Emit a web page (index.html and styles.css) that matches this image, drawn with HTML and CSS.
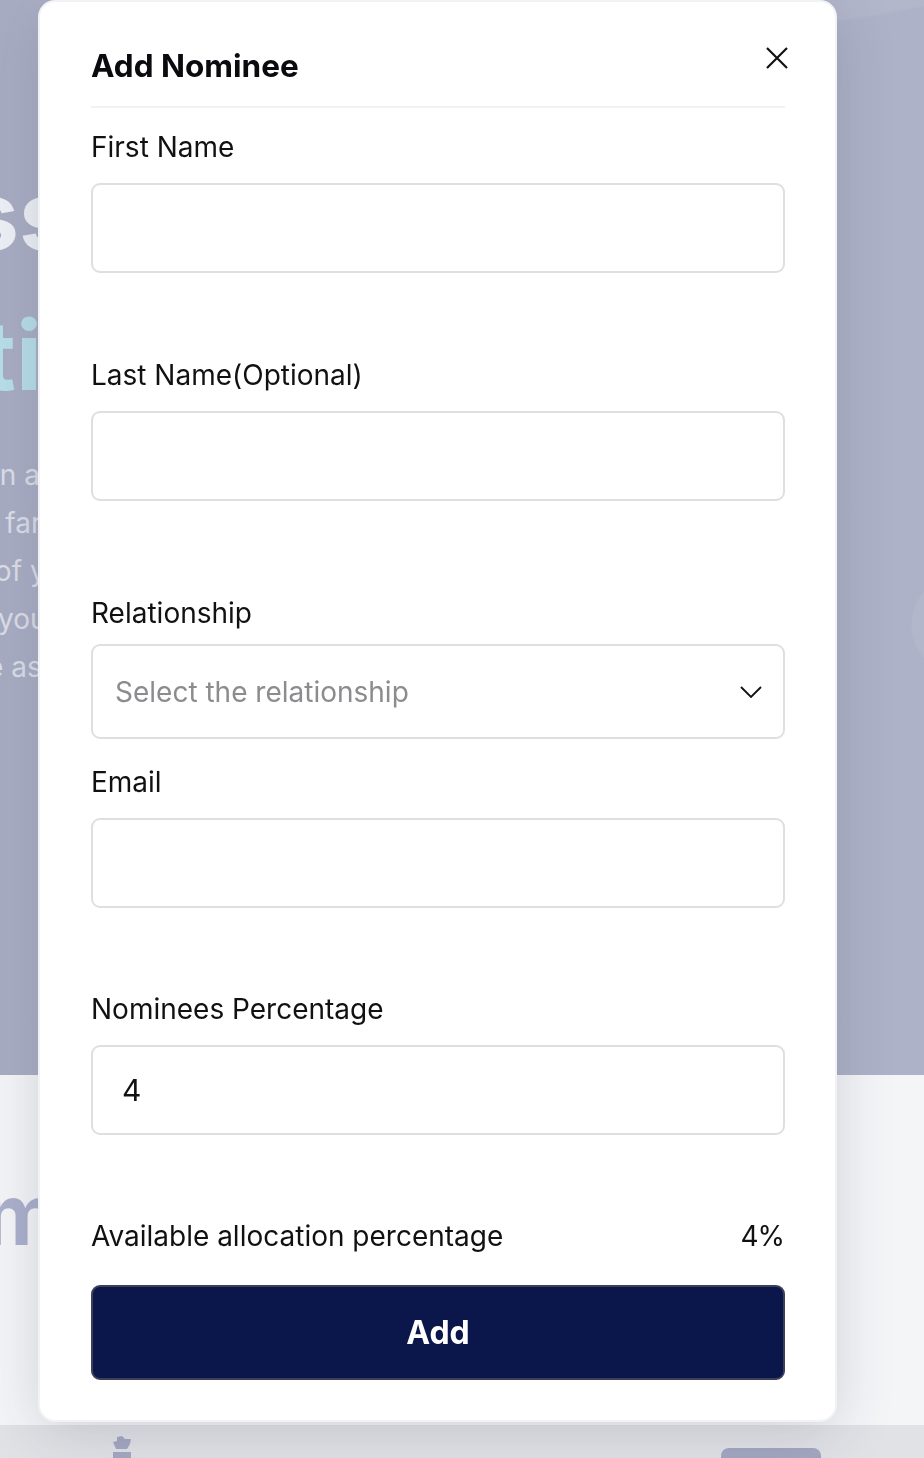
FILE: index.html
```html
<!DOCTYPE html>
<html lang="en">
<head>
<meta charset="utf-8">
<title>Add Nominee</title>
<link rel="stylesheet" href="styles.css">
</head>
<body>
<div class="page">
  <section class="hero">
    <div class="hero-title">
      <div class="clip-line ht1"><span>Busines</span><span class="tail">s</span></div>
      <div class="clip-line ht2"><span>Protecti</span><span class="tail">on</span></div>
    </div>
    <div class="hero-para">
      <div class="clip-line p1"><span>Protection when a</span><span class="tail">n</span></div>
      <div class="clip-line p2"><span>you have come so fa</span><span class="tail">r</span></div>
      <div class="clip-line p3"><span>taking care of</span><span class="tail">&nbsp;your</span></div>
      <div class="clip-line p4"><span>family and yo</span><span class="tail">ur</span></div>
      <div class="clip-line p5"><span>loved ones are the same a</span><span class="tail">ssets</span></div>
    </div>
  </section>
  <section class="features">
    <div class="clip-line f1"><span>Premium</span><span class="tail"></span></div>
  </section>
  <footer class="strip">
    <svg class="strip-icon" width="28" height="22" viewBox="0 0 28 22"><path d="M9 1 L14 0 L17 3 L23 3 L22 8 L19 13 L8 13 L5 6 L9 5 Z" fill="#a4a8c3"/><rect x="5" y="16" width="18" height="6" fill="#a4a8c3"/></svg>
    <div class="strip-pill"></div>
  </footer>
</div>

<div class="overlay">
  <div class="modal">
    <div class="modal-head">
      <h2 class="modal-title">Add Nominee</h2>
      <button class="close-btn" aria-label="Close">
        <svg width="24" height="24" viewBox="0 0 24 24"><path d="M2 2 L22 22 M22 2 L2 22" stroke="#111" stroke-width="2.2" stroke-linecap="butt" fill="none"/></svg>
      </button>
    </div>
    <div class="divider"></div>
    <form class="form">
      <div class="field f-first">
        <label class="label">First Name</label>
        <div class="input"></div>
      </div>
      <div class="field f-last">
        <label class="label">Last Name(Optional)</label>
        <div class="input"></div>
      </div>
      <div class="field f-rel">
        <label class="label">Relationship</label>
        <div class="input select">
          <span class="placeholder">Select the relationship</span>
          <svg class="chev" width="22" height="12" viewBox="0 0 22 12"><path d="M1 1 L11 11 L21 1" stroke="#111" stroke-width="1.8" fill="none"/></svg>
        </div>
      </div>
      <div class="field f-email">
        <label class="label">Email</label>
        <div class="input"></div>
      </div>
      <div class="field f-pct">
        <label class="label">Nominees Percentage</label>
        <div class="input"><span class="value">4</span></div>
      </div>
      <div class="alloc">
        <span>Available allocation percentage</span>
        <span class="alloc-val">4%</span>
      </div>
      <button type="button" class="add-btn">Add</button>
    </form>
  </div>
</div>
</body>
</html>
```

FILE: styles.css
```css
* { box-sizing: border-box; }
html, body { margin: 0; padding: 0; }
body {
  width: 924px;
  height: 1458px;
  overflow: hidden;
  font-family: Inter, "Noto Sans", sans-serif;
  background: #f4f5f7;
}
.page { width: 924px; }

.hero {
  height: 1075px;
  background:
    radial-gradient(circle at 962px 625px, rgba(255,255,255,0.06) 0, rgba(255,255,255,0.06) 50px, rgba(255,255,255,0) 51px),
    radial-gradient(ellipse 400px 130px at 700px -100px, rgba(255,255,255,0.06) 0, rgba(255,255,255,0.06) 98%, rgba(255,255,255,0) 100%),
    linear-gradient(90deg, #a8acc2 0, #adb1c7 60px, #aeb2c8 100%);
  padding-top: 145px;
  overflow: hidden;
}
.clip-line {
  display: flex;
  justify-content: flex-end;
  white-space: nowrap;
}
.tail {
  width: 0;
  min-width: 0;
  flex-shrink: 0;
  overflow: visible;
}
.hero-title .clip-line {
  font-weight: 700;
  font-size: 96px;
  line-height: 140px;
  height: 140px;
}
.ht1 { color: #eef0f6; width: 19px; }
.ht2 { color: #b8dfe9; width: 42px; }
.hero-para {
  margin-top: 26px;
  font-size: 28px;
  color: #dcdee8;
}
.hero-para .clip-line { height: 48px; line-height: 48px; }
.p1 { width: 40px; }
.p2 { width: 31px; }
.p3 { width: 22px; }
.p4 { width: 30px; }
.p5 { width: 27px; }

.features {
  height: 350px;
  background: #f4f5f7;
  padding-top: 90px;
}
.f1 {
  width: 60px;
  font-weight: 700;
  font-size: 84px;
  line-height: 100px;
  color: #abb0cc;
}
.strip {
  height: 33px;
  background: #e1e2e6;
  display: flex;
  align-items: flex-end;
  padding-left: 108px;
}
.strip-icon { display: block; }
.strip-pill {
  margin-left: 585px;
  width: 100px;
  height: 10px;
  background: #a3a7c0;
  border-radius: 8px 8px 0 0;
}

.overlay {
  position: fixed;
  inset: 0;
  padding: 2px 0 0 40px;
}
.modal {
  width: 795px;
  height: 1418px;
  background: #fff;
  border-radius: 15px;
  box-shadow: 0 0 0 2px #f1f2f5, 0 10px 60px rgba(40, 44, 70, 0.18);
  padding: 44px 50px 0 51px;
}
.modal-head {
  display: flex;
  justify-content: space-between;
  align-items: flex-start;
}
.modal-title {
  margin: 0;
  font-size: 31.5px;
  line-height: 40px;
  font-weight: 700;
  color: #0a0a0f;
}
.close-btn {
  border: 0;
  background: none;
  padding: 0;
  margin: 0 -4px 0 0;
  width: 24px;
  height: 24px;
  cursor: pointer;
}
.close-btn svg { display: block; }
.divider {
  margin-top: 20px;
  height: 2px;
  background: #f1f2f5;
}
.form { display: flex; flex-direction: column; }
.field { display: flex; flex-direction: column; }
.label {
  font-size: 28px;
  line-height: 34px;
  color: #111;
}
.input {
  margin-top: 19px;
  height: 90px;
  border: 2px solid #dedfe1;
  border-radius: 9px;
  display: flex;
  align-items: center;
  padding: 0 29px;
}
.f-first { margin-top: 22px; }
.f-last { margin-top: 85px; }
.f-rel { margin-top: 95px; }
.f-rel .input { margin-top: 14px; height: 95px; justify-content: space-between; padding: 0 21px 0 22px; }
.f-email { margin-top: 26px; }
.f-pct { margin-top: 84px; }
.placeholder { font-size: 28px; color: #8c8c8f; }
.value { font-size: 30px; color: #111; }
.alloc {
  margin-top: 84px;
  display: flex;
  justify-content: space-between;
  font-size: 28px;
  line-height: 34px;
  color: #111;
}
.alloc-val { letter-spacing: -1px; padding-right: 1px; }
.add-btn {
  margin-top: 32px;
  height: 95px;
  border: 2px solid #3b4057;
  border-radius: 9px;
  background: #0b164a;
  color: #fff;
  font-family: Inter, sans-serif;
  font-size: 32px;
  font-weight: 700;
}
```
